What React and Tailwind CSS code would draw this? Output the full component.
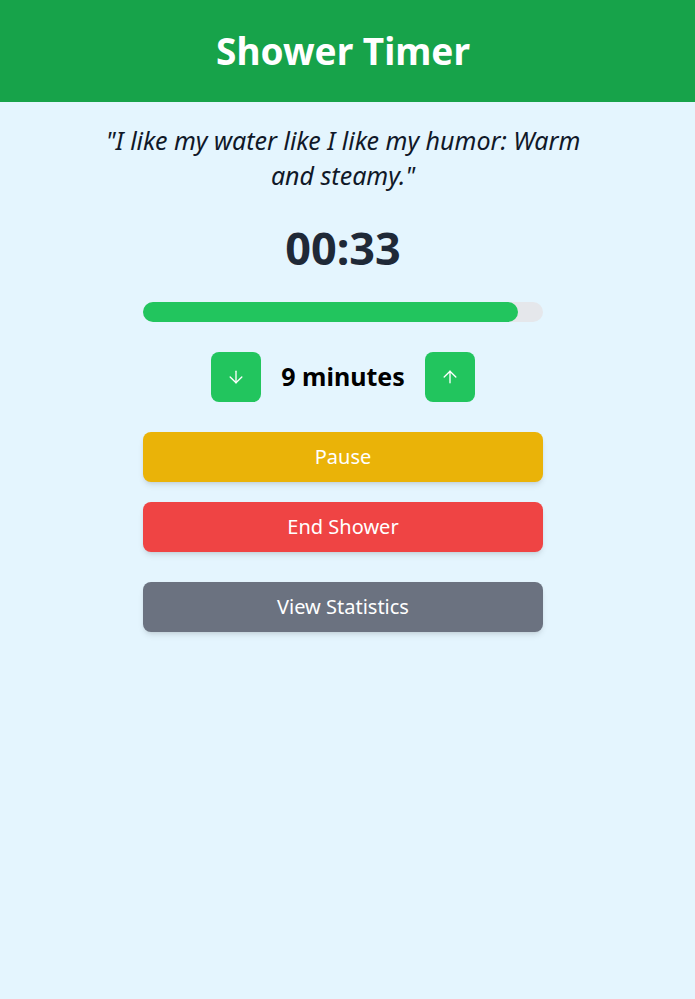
import React from "react";
import { ArrowDown, ArrowUp } from "lucide-react";

const App = () => {
  const progress = 93.75;

  return (
    <div
      className="min-h-screen bg-[#e4f5fe]"
      style={{ fontFamily: '"Noto Sans", "Open Sans", sans-serif' }}
    >
      <header className="h-[102px] bg-[#17a34a] flex items-center justify-center pr-[9px]">
        <h1 className="text-[37px] font-bold text-white">Shower Timer</h1>
      </header>

      <main className="flex flex-col items-center px-4 pr-[25px]">
        <p className="mt-[21px] max-w-[500px] text-center text-[25px] italic leading-[35px] text-gray-900">
          "I like my water like I like my humor: Warm and steamy."
        </p>

        <div className="mt-[31px] text-[45px] font-bold text-[#1f2937] leading-[48px]">00:33</div>

        <div className="mt-[30px] w-[400px] h-5 rounded-full bg-[#e5e7eb]">
          <div className="h-5 rounded-full bg-[#22c55e]" style={{ width: `${progress}%` }} />
        </div>

        {/* duration controls */}
        <div className="mt-[30px] flex items-center gap-5">
          <button className="w-[50px] h-[50px] rounded-lg bg-[#22c55e] text-white flex items-center justify-center">
            <ArrowDown size={20} strokeWidth={1.6} />
          </button>
          <span className="text-[25px] font-bold text-black">9 minutes</span>
          <button className="w-[50px] h-[50px] rounded-lg bg-[#22c55e] text-white flex items-center justify-center">
            <ArrowUp size={20} strokeWidth={1.6} />
          </button>
        </div>

        <div className="mt-[30px] w-[400px] flex flex-col">
          <button className="h-[50px] rounded-lg bg-[#eab308] text-white text-xl shadow-md">
            Pause
          </button>
          <button className="mt-5 h-[50px] rounded-lg bg-[#ef4444] text-white text-xl shadow-md">
            End Shower
          </button>
          <button className="mt-[30px] h-[50px] rounded-lg bg-[#6b7280] text-white text-xl shadow-md">
            View Statistics
          </button>
        </div>
      </main>
    </div>
  );
};

export default App;
